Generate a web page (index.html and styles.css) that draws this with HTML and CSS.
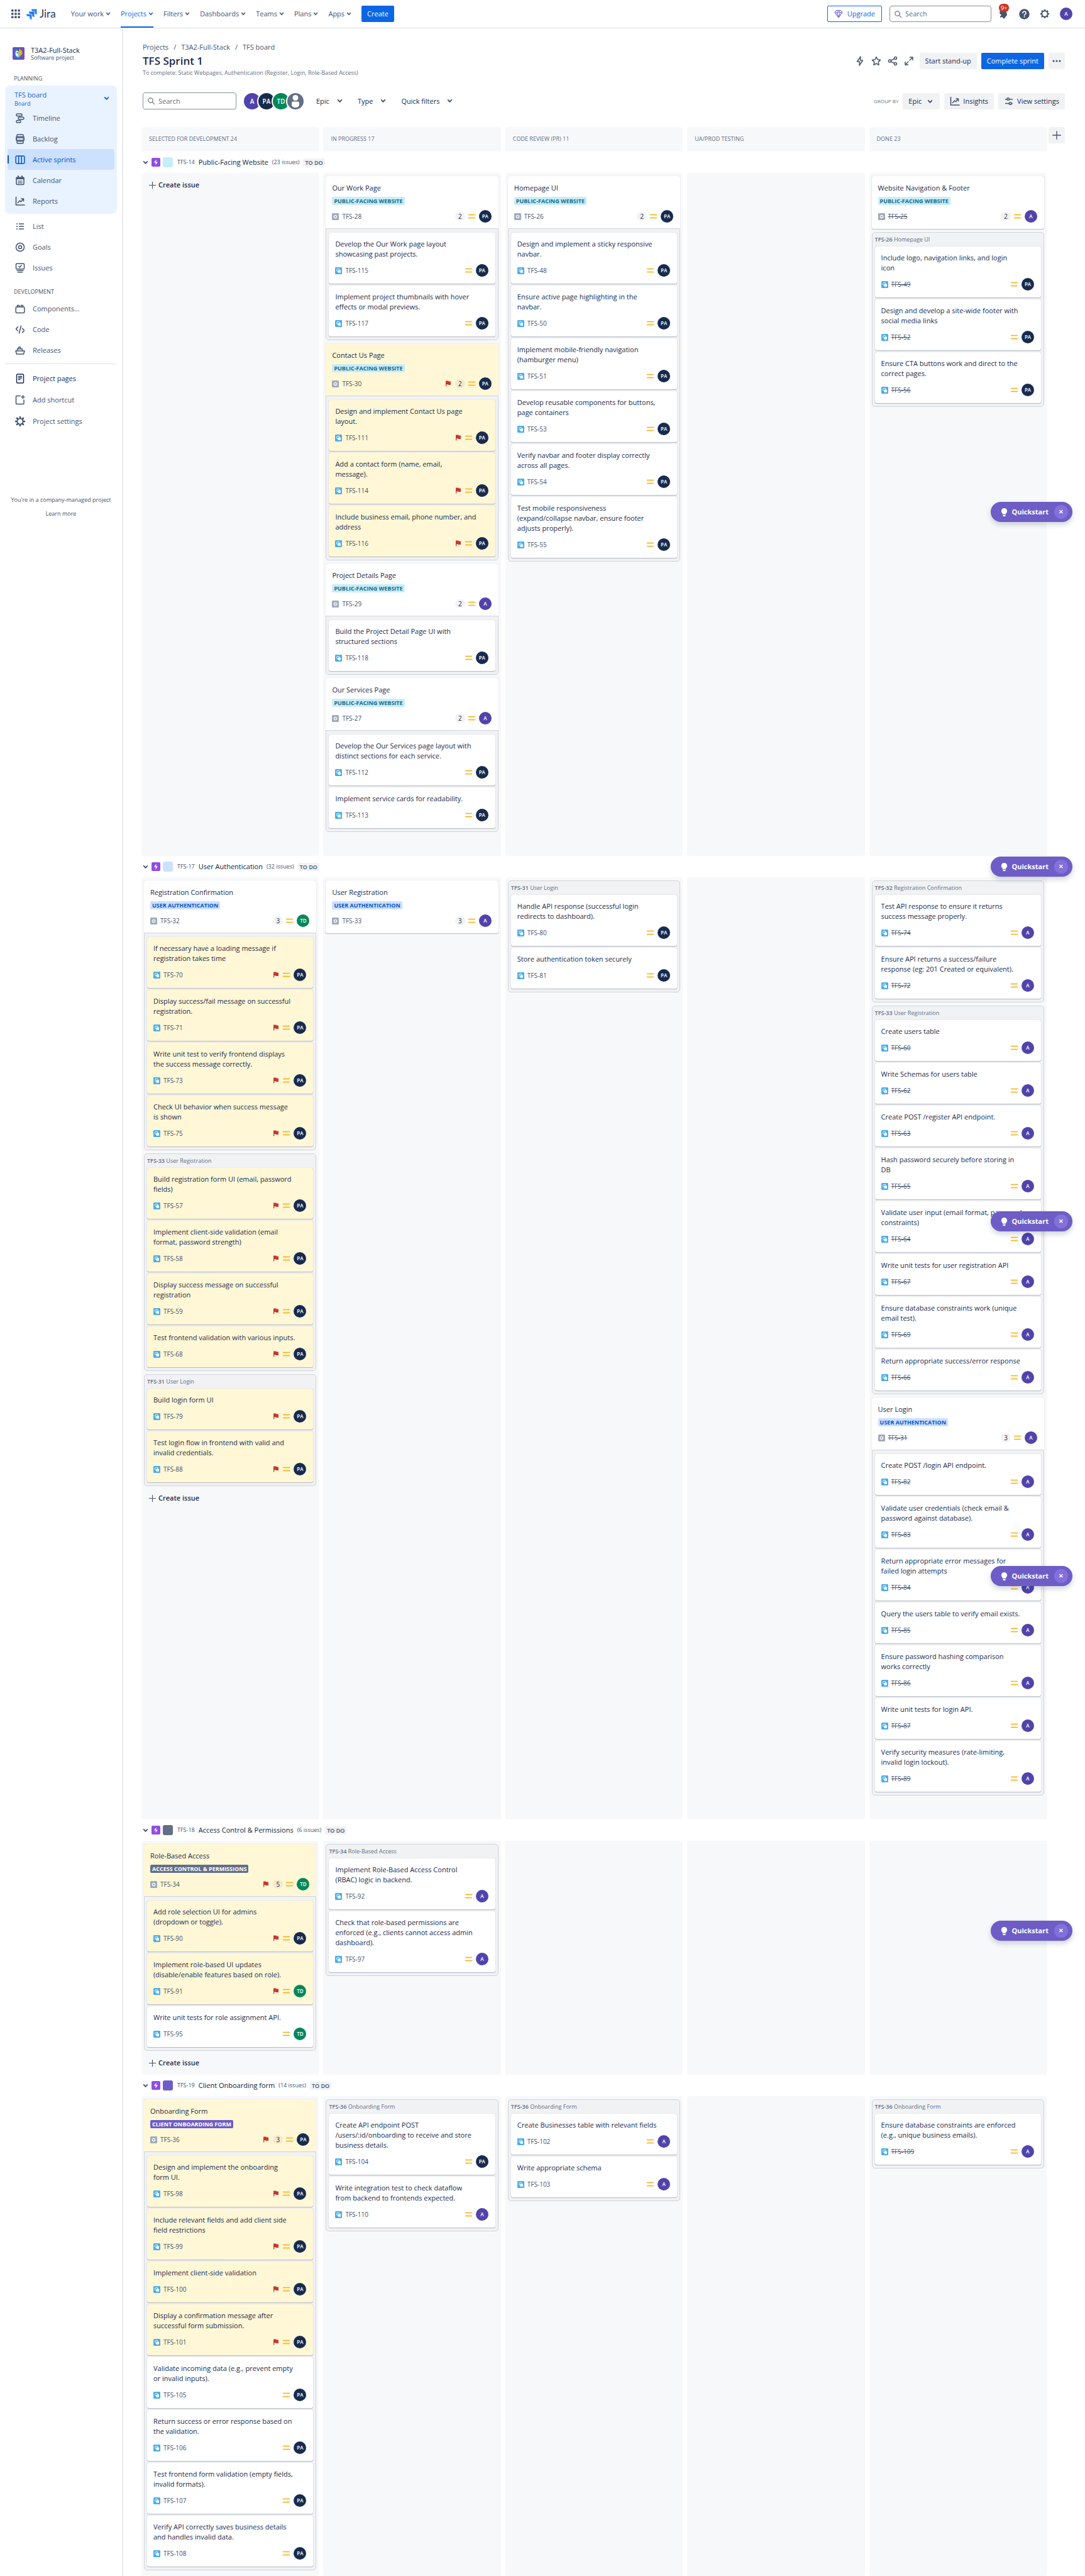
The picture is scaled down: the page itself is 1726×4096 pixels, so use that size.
FILE: index.html
```html
<!DOCTYPE html>
<html lang="en">
<head>
<meta charset="utf-8">
<title>TFS Sprint 1 - Jira</title>
<meta name="viewport" content="width=device-width, initial-scale=1">
<link rel="stylesheet" href="styles.css">
</head>
<body>
<svg class="defs" aria-hidden="true">
  <symbol id="chev" viewBox="0 0 8 8"><path d="M1.5 2.5 4 5.3 6.500 2.500" fill="none" stroke="currentColor" stroke-width="1.600" stroke-linecap="round" stroke-linejoin="round"/></symbol>
  <symbol id="sub" viewBox="0 0 12 12"><rect width="12" height="12" rx="1.500" fill="#4BADE8"/><rect x="3" y="2.800" width="4.600" height="4.200" rx=".8" fill="none" stroke="#fff"/><rect x="5" y="5" width="4.800" height="4.500" rx=".8" fill="#fff"/></symbol>
  <symbol id="obj" viewBox="0 0 12 12"><rect width="12" height="12" rx="1.500" fill="#9FABBB"/><circle cx="6" cy="6" r="2.300" fill="none" stroke="#fff" stroke-width="1.400"/></symbol>
  <symbol id="pri" viewBox="0 0 11 12"><path d="M.5 3.500h10M.5 8.500h10" stroke="#FFAB00" stroke-width="1.600" fill="none" stroke-linecap="round"/></symbol>
  <symbol id="flag" viewBox="0 0 8 10"><path d="M0 .6V9.500h1.300V6.200h2.200l.6.9H8V1.500H5L4.400.6z" fill="#C9372C"/></symbol>
  <symbol id="epic" viewBox="0 0 14 14"><rect width="14" height="14" rx="2" fill="#904EE2"/><path d="M7.600 2.500 4 7.600h2.700L6.400 11.500 10 6.400H7.300z" fill="#fff"/></symbol>
  <symbol id="plus" viewBox="0 0 14 14"><path d="M7 1.500v11M1.500 7h11" stroke="currentColor" stroke-width="1.200" fill="none" stroke-linecap="round"/></symbol>
  <symbol id="search" viewBox="0 0 14 14"><circle cx="6" cy="6" r="4" fill="none" stroke="currentColor" stroke-width="1.300"/><path d="m9 9 3.500 3.500" stroke="currentColor" stroke-width="1.300" stroke-linecap="round"/></symbol>
  <symbol id="gear" viewBox="0 0 16 16"><circle cx="8" cy="8" r="4.600" fill="none" stroke="currentColor" stroke-width="1.800"/><path d="M8 1v2M8 13v2M1 8h2M13 8h2M3 3l1.500 1.500M11.500 11.500 13 13M3 13l1.500-1.500M11.500 4.500 13 3" stroke="currentColor" stroke-width="2.600"/></symbol>
  <symbol id="chart" viewBox="0 0 16 16"><path d="M1.500 1.500v12.500H15" fill="none" stroke="currentColor" stroke-width="1.600" stroke-linecap="round" stroke-linejoin="round"/><path d="m4.500 10.500 3-3.500 2 1.800 3.800-4.600M9.800 4h3.700v3.700" fill="none" stroke="currentColor" stroke-width="1.500" stroke-linecap="round" stroke-linejoin="round"/></symbol>
  <symbol id="bulb" viewBox="0 0 12 16"><path d="M6 1a5 5 0 0 0-3 9v1.500h6V10a5 5 0 0 0-3-9zM3.800 12.600h4.400V15H3.800z" fill="#fff"/></symbol>
</svg>

<header class="topbar">
  <nav class="topnav" aria-label="Main">
    <button class="bare" type="button" aria-label="Switch apps"><svg width="14" height="14" viewBox="0 0 14 14" fill="#44546F"><rect width="3.500" height="3.500" rx="1"/><rect x="5.200" width="3.500" height="3.500" rx="1"/><rect x="10.400" width="3.500" height="3.500" rx="1"/><rect y="5.200" width="3.500" height="3.500" rx="1"/><rect x="5.200" y="5.200" width="3.500" height="3.500" rx="1"/><rect x="10.400" y="5.200" width="3.500" height="3.500" rx="1"/><rect y="10.400" width="3.500" height="3.500" rx="1"/><rect x="5.200" y="10.400" width="3.500" height="3.500" rx="1"/><rect x="10.400" y="10.400" width="3.500" height="3.500" rx="1"/></svg></button>
    <a class="brand" href="#"><svg width="17" height="17" viewBox="0 0 17 17"><path d="M8 .5h8.500V9A3.300 3.300 0 0 1 13.200 5.700V4h-1.700A3.400 3.400 0 0 1 8 .5z" fill="#2684FF"/><path d="M4 4.500h8.500V13a3.300 3.300 0 0 1-3.300-3.300V8H7.500A3.400 3.400 0 0 1 4 4.500z" fill="#2472E8"/><path d="M0 8.500h8.500V17a3.300 3.300 0 0 1-3.300-3.300V12H3.500A3.400 3.400 0 0 1 0 8.500z" fill="#2684FF"/></svg>Jira</a>
    <a class="item" href="#">Your work<svg><use href="#chev"/></svg></a>
    <a class="item current" href="#">Projects<svg><use href="#chev"/></svg></a>
    <a class="item" href="#">Filters<svg><use href="#chev"/></svg></a>
    <a class="item" href="#">Dashboards<svg><use href="#chev"/></svg></a>
    <a class="item" href="#">Teams<svg><use href="#chev"/></svg></a>
    <a class="item" href="#">Plans<svg><use href="#chev"/></svg></a>
    <a class="item" href="#">Apps<svg><use href="#chev"/></svg></a>
    <button class="btn primary" type="button">Create</button>
  </nav>
  <div class="tools">
    <button class="btn upgrade" type="button"><svg width="14" height="14" viewBox="0 0 14 14" fill="none" stroke="#8270DB" stroke-width="1.200" stroke-linejoin="round"><path d="M3.500 1.500h7L13 5l-6 8L1 5zM1 5h12M4.500 5 7 13l2.500-8L7 1.500z"/></svg>Upgrade</button>
    <label class="field top"><svg><use href="#search"/></svg><input type="search" placeholder="Search" aria-label="Search Jira"></label>
    <button class="bare bell" type="button" aria-label="Notifications"><svg width="16" height="18" viewBox="0 0 16 18" fill="#44546F"><path d="M2 3c4-2 9 0 10 3l1 5-5 6-3-3-3 1v-2l2-2-3-3z"/></svg><span>9+</span></button>
    <button class="bare" type="button" aria-label="Help"><svg width="17" height="17" viewBox="0 0 17 17"><circle cx="8.500" cy="8.500" r="8.200" fill="#44546F"/><path d="M6 6.700a2.500 2.500 0 1 1 3.600 2.200c-.8.4-1.100.8-1.100 1.500" fill="none" stroke="#fff" stroke-width="1.600" stroke-linecap="round"/><circle cx="8.500" cy="12.700" r="1" fill="#fff"/></svg></button>
    <button class="bare" type="button" aria-label="Settings"><svg width="16" height="16"><use href="#gear"/></svg></button>
    <span class="av a">A</span>
  </div>
</header>

<div class="shell">
<aside class="side">
  <div class="project">
    <svg width="19" height="20" viewBox="0 0 19 20"><rect width="19" height="20" rx="2" fill="#6554C0"/><path d="M10 3.500a6 6.500 0 0 0 0 13z" fill="#fff" stroke="#00B8D9" stroke-width="1.400"/><path d="M10 3a6 6.500 0 0 1 5.500 8L10 16z" fill="#FFAB00"/><path d="M10 3a6 6.500 0 0 0-3 1.500l3 2.500z" fill="#253858"/><circle cx="7.500" cy="9" r="1.100" fill="#253858"/></svg>
    <div><strong>T3A2-Full-Stack</strong><small>Software project</small></div>
  </div>
  <h2>Planning</h2>
  <nav class="panel" aria-label="Board">
    <button class="boardpick" type="button"><span>TFS board<small>Board</small></span><svg><use href="#chev"/></svg></button>
    <a href="#"><svg viewBox="0 0 16 16"><rect x="2" y="1" width="9" height="3.500" rx="1.500"/><rect x="5" y="6.200" width="9" height="3.500" rx="1.500"/><rect x="2" y="11.500" width="7" height="3.500" rx="1.500"/></svg>Timeline</a>
    <a href="#"><svg viewBox="0 0 16 16"><rect x="3" y="1" width="10" height="3.500" rx="1"/><path d="M2 4.500v6M14 4.500v6"/><rect x="2" y="6" width="12" height="4" rx="1"/><rect x="3" y="11.500" width="10" height="3.500" rx="1"/></svg>Backlog</a>
    <a class="on" href="#"><svg viewBox="0 0 16 16"><rect x="1.200" y="2" width="13.600" height="12" rx="1.500"/><path d="M5.700 2v12M10.300 2v12"/></svg>Active sprints</a>
    <a href="#"><svg viewBox="0 0 16 16"><rect x="2" y="3" width="12" height="11.500" rx="1.500"/><path d="M2 5h12M5 1v2M11 1v2" stroke-width="2"/><path d="M5 9h1M7.500 9h1M10 9h1M5 11.700h1M7.500 11.700h1M10 11.700h1"/></svg>Calendar</a>
    <a href="#"><svg><use href="#chart"/></svg>Reports</a>
  </nav>
  <nav class="links" aria-label="Planning">
    <a href="#"><svg viewBox="0 0 16 16"><path d="M2.500 4h1M6.500 4h7M2.500 8h1M6.500 8h7M2.500 12h1M6.500 12h7"/></svg>List</a>
    <a href="#"><svg viewBox="0 0 16 16"><circle cx="8" cy="8" r="6.500"/><circle cx="8" cy="8" r="2.500"/></svg>Goals</a>
    <a href="#"><svg viewBox="0 0 16 16"><rect x="1.500" y="1.200" width="13" height="8.600" rx="1"/><path d="m6 5.500 1.500 1.500L10 4M3 12.200h10M4.500 14.800h7"/></svg>Issues</a>
  </nav>
  <h2>Development</h2>
  <nav class="links" aria-label="Development">
    <a href="#"><svg viewBox="0 0 16 16"><rect x="1.200" y="5" width="13.600" height="9.500" rx="1.500"/><path d="M3.500 5V2.500h3V5M9.500 5V2.500h3V5"/></svg>Components...</a>
    <a href="#"><svg viewBox="0 0 16 16"><path d="M4.500 3.500 1.500 7l3 3M9.500 2l-3 12M11.500 6l3 3.500-3 3.500"/></svg>Code</a>
    <a href="#"><svg viewBox="0 0 16 16"><path d="M1 9h14l-1.500 5h-11zM3.500 9V5.800h8V9M5.500 5.800V3h3v2.800"/></svg>Releases</a>
  </nav>
  <hr>
  <nav class="links" aria-label="Project">
    <a class="strong" href="#"><svg viewBox="0 0 16 16"><rect x="2.500" y="1" width="11" height="14" rx="1.500"/><path d="M5.500 4.500h5M5.500 7h5M5.500 9.500h2.500"/></svg>Project pages</a>
    <a href="#"><svg viewBox="0 0 16 16"><path d="M8 1.500H2.500a1 1 0 0 0-1 1v11a1 1 0 0 0 1 1h10.500a1 1 0 0 0 1-1V8M12.500.8v5M10 3.300h5"/></svg>Add shortcut</a>
    <a href="#"><svg><use href="#gear"/></svg>Project settings</a>
  </nav>
  <div class="managed"><p>You're in a company-managed project</p><a href="#">Learn more</a></div>
</aside>

<main>
  <nav class="crumbs" aria-label="Breadcrumb"><a href="#">Projects</a><span>/</span><a href="#">T3A2-Full-Stack</a><span>/</span><a href="#">TFS board</a></nav>
  <div class="titlebar">
    <h1>TFS Sprint 1</h1>
    <div class="actions">
      <button class="bare" type="button" aria-label="Automation"><svg viewBox="0 0 16 16"><path d="M9 1 3.500 9H7.500L7 15l5.500-8H8.500z"/></svg></button>
      <button class="bare" type="button" aria-label="Star"><svg viewBox="0 0 16 16"><path d="m8 1.500 2 4.300 4.600.6-3.400 3.200.9 4.700L8 12l-4.100 2.300.9-4.700L1.400 6.400 6 5.800z"/></svg></button>
      <button class="bare" type="button" aria-label="Share"><svg viewBox="0 0 16 16"><circle cx="3.500" cy="8" r="2"/><circle cx="12.500" cy="3.500" r="2"/><circle cx="12.500" cy="12.500" r="2"/><path d="m5.500 7 5-2.600M5.500 9l5 2.600"/></svg></button>
      <button class="bare" type="button" aria-label="Full screen"><svg viewBox="0 0 16 16"><path d="M9.500 2H14v4.500M14 2 9.300 6.700M6.500 14H2V9.500M2 14l4.700-4.700"/></svg></button>
      <button class="btn" type="button">Start stand-up</button>
      <button class="btn primary" type="button">Complete sprint</button>
      <button class="btn square" type="button" aria-label="More"><svg width="14" height="4" viewBox="0 0 14 4" fill="#44546F"><circle cx="2" cy="2" r="1.600"/><circle cx="7" cy="2" r="1.600"/><circle cx="12" cy="2" r="1.600"/></svg></button>
    </div>
  </div>
  <p class="goal">To complete: Static Webpages, Authentication (Register, Login, Role-Based Access)</p>
  <div class="toolbar">
    <label class="field"><svg><use href="#search"/></svg><input type="search" placeholder="Search" aria-label="Search this board"></label>
    <div class="people"><span class="av a">A</span><span class="av pa">PA</span><span class="av td">TD</span><span class="av none"><svg width="14" height="22" viewBox="0 0 14 22" fill="#fff"><circle cx="7" cy="5.500" r="4.500"/><path d="M1 13.500a2 2 0 0 1 2-2h8a2 2 0 0 1 2 2V17a6 4 0 0 1-12 0z"/></svg></span></div>
    <button class="menu" type="button">Epic<svg><use href="#chev"/></svg></button>
    <button class="menu" type="button">Type<svg><use href="#chev"/></svg></button>
    <button class="menu" type="button">Quick filters<svg><use href="#chev"/></svg></button>
    <div class="view">
      <label for="group">Group by</label>
      <span class="pick"><select id="group"><option>Epic</option></select><svg><use href="#chev"/></svg></span>
      <button class="btn" type="button"><svg width="16" height="16"><use href="#chart"/></svg>Insights</button>
      <button class="btn" type="button"><svg width="16" height="16" viewBox="0 0 16 16" fill="none" stroke="currentColor" stroke-width="1.500"><path d="M2 5h2.500M9 5h5M2 11.500h6M12.500 11.500H14"/><circle cx="6.700" cy="4.500" r="1.800"/><circle cx="10.200" cy="11.500" r="1.800"/></svg>View settings</button>
    </div>
  </div>

  <div class="heads">
    <div class="grid"><h3>Selected for development 24</h3><h3>In progress 17</h3><h3>Code review (PR) 11</h3><h3>UA/Prod testing</h3><h3>Done 23</h3></div>
    <button class="btn square" type="button" aria-label="Add column"><svg width="16" height="16"><use href="#plus"/></svg></button>
  </div>

  <section class="lane">
    <header><svg class="tog"><use href="#chev"/></svg><svg class="epic"><use href="#epic"/></svg><i class="sw cyan"></i><a href="#">TFS-14</a><b>Public-Facing Website</b><span>(23 issues)</span><em>TO DO</em></header>
    <div class="grid">
      <div class="col">
        <button class="create" type="button"><svg><use href="#plus"/></svg>Create issue</button>
      </div>
      <div class="col">
        <div class="group">
          <article class="card parent"><p>Our Work Page</p><span class="tag cyan">PUBLIC-FACING WEBSITE</span><footer><svg class="ty"><use href="#obj"/></svg><a href="#">TFS-28</a><span class="est">2</span><svg class="pr"><use href="#pri"/></svg><span class="av pa">PA</span></footer></article>
          <div class="subs">
            <article class="card"><p>Develop the Our Work page layout<br>showcasing past projects.</p><footer><svg class="ty"><use href="#sub"/></svg><a href="#">TFS-115</a><svg class="pr"><use href="#pri"/></svg><span class="av pa">PA</span></footer></article>
            <article class="card"><p>Implement project thumbnails with hover<br>effects or modal previews.</p><footer><svg class="ty"><use href="#sub"/></svg><a href="#">TFS-117</a><svg class="pr"><use href="#pri"/></svg><span class="av pa">PA</span></footer></article>
          </div>
        </div>
        <div class="group">
          <article class="card parent hot"><p>Contact Us Page</p><span class="tag cyan">PUBLIC-FACING WEBSITE</span><footer><svg class="ty"><use href="#obj"/></svg><a href="#">TFS-30</a><svg class="fl"><use href="#flag"/></svg><span class="est">2</span><svg class="pr"><use href="#pri"/></svg><span class="av pa">PA</span></footer></article>
          <div class="subs">
            <article class="card hot"><p>Design and implement Contact Us page<br>layout.</p><footer><svg class="ty"><use href="#sub"/></svg><a href="#">TFS-111</a><svg class="fl"><use href="#flag"/></svg><svg class="pr"><use href="#pri"/></svg><span class="av pa">PA</span></footer></article>
            <article class="card hot"><p>Add a contact form (name, email,<br>message).</p><footer><svg class="ty"><use href="#sub"/></svg><a href="#">TFS-114</a><svg class="fl"><use href="#flag"/></svg><svg class="pr"><use href="#pri"/></svg><span class="av pa">PA</span></footer></article>
            <article class="card hot"><p>Include business email, phone number, and<br>address</p><footer><svg class="ty"><use href="#sub"/></svg><a href="#">TFS-116</a><svg class="fl"><use href="#flag"/></svg><svg class="pr"><use href="#pri"/></svg><span class="av pa">PA</span></footer></article>
          </div>
        </div>
        <div class="group">
          <article class="card parent"><p>Project Details Page</p><span class="tag cyan">PUBLIC-FACING WEBSITE</span><footer><svg class="ty"><use href="#obj"/></svg><a href="#">TFS-29</a><span class="est">2</span><svg class="pr"><use href="#pri"/></svg><span class="av a">A</span></footer></article>
          <div class="subs">
            <article class="card"><p>Build the Project Detail Page UI with<br>structured sections</p><footer><svg class="ty"><use href="#sub"/></svg><a href="#">TFS-118</a><svg class="pr"><use href="#pri"/></svg><span class="av pa">PA</span></footer></article>
          </div>
        </div>
        <div class="group">
          <article class="card parent"><p>Our Services Page</p><span class="tag cyan">PUBLIC-FACING WEBSITE</span><footer><svg class="ty"><use href="#obj"/></svg><a href="#">TFS-27</a><span class="est">2</span><svg class="pr"><use href="#pri"/></svg><span class="av a">A</span></footer></article>
          <div class="subs">
            <article class="card"><p>Develop the Our Services page layout with<br>distinct sections for each service.</p><footer><svg class="ty"><use href="#sub"/></svg><a href="#">TFS-112</a><svg class="pr"><use href="#pri"/></svg><span class="av pa">PA</span></footer></article>
            <article class="card"><p>Implement service cards for readability.</p><footer><svg class="ty"><use href="#sub"/></svg><a href="#">TFS-113</a><svg class="pr"><use href="#pri"/></svg><span class="av pa">PA</span></footer></article>
          </div>
        </div>
      </div>
      <div class="col">
        <div class="group">
          <article class="card parent"><p>Homepage UI</p><span class="tag cyan">PUBLIC-FACING WEBSITE</span><footer><svg class="ty"><use href="#obj"/></svg><a href="#">TFS-26</a><span class="est">2</span><svg class="pr"><use href="#pri"/></svg><span class="av pa">PA</span></footer></article>
          <div class="subs">
            <article class="card"><p>Design and implement a sticky responsive<br>navbar.</p><footer><svg class="ty"><use href="#sub"/></svg><a href="#">TFS-48</a><svg class="pr"><use href="#pri"/></svg><span class="av pa">PA</span></footer></article>
            <article class="card"><p>Ensure active page highlighting in the<br>navbar.</p><footer><svg class="ty"><use href="#sub"/></svg><a href="#">TFS-50</a><svg class="pr"><use href="#pri"/></svg><span class="av pa">PA</span></footer></article>
            <article class="card"><p>Implement mobile-friendly navigation<br>(hamburger menu)</p><footer><svg class="ty"><use href="#sub"/></svg><a href="#">TFS-51</a><svg class="pr"><use href="#pri"/></svg><span class="av pa">PA</span></footer></article>
            <article class="card"><p>Develop reusable components for buttons,<br>page containers</p><footer><svg class="ty"><use href="#sub"/></svg><a href="#">TFS-53</a><svg class="pr"><use href="#pri"/></svg><span class="av pa">PA</span></footer></article>
            <article class="card"><p>Verify navbar and footer display correctly<br>across all pages.</p><footer><svg class="ty"><use href="#sub"/></svg><a href="#">TFS-54</a><svg class="pr"><use href="#pri"/></svg><span class="av pa">PA</span></footer></article>
            <article class="card"><p>Test mobile responsiveness<br>(expand/collapse navbar, ensure footer<br>adjusts properly).</p><footer><svg class="ty"><use href="#sub"/></svg><a href="#">TFS-55</a><svg class="pr"><use href="#pri"/></svg><span class="av pa">PA</span></footer></article>
          </div>
        </div>
      </div>
      <div class="col"></div>
      <div class="col done">
        <article class="card parent"><p>Website Navigation &amp; Footer</p><span class="tag cyan">PUBLIC-FACING WEBSITE</span><footer><svg class="ty"><use href="#obj"/></svg><a href="#">TFS-25</a><span class="est">2</span><svg class="pr"><use href="#pri"/></svg><span class="av a">A</span></footer></article>
        <div class="group subs">
          <h4><b>TFS-26</b> Homepage UI</h4>
          <article class="card"><p>Include logo, navigation links, and login<br>icon</p><footer><svg class="ty"><use href="#sub"/></svg><a href="#">TFS-49</a><svg class="pr"><use href="#pri"/></svg><span class="av pa">PA</span></footer></article>
          <article class="card"><p>Design and develop a site-wide footer with<br>social media links</p><footer><svg class="ty"><use href="#sub"/></svg><a href="#">TFS-52</a><svg class="pr"><use href="#pri"/></svg><span class="av pa">PA</span></footer></article>
          <article class="card"><p>Ensure CTA buttons work and direct to the<br>correct pages.</p><footer><svg class="ty"><use href="#sub"/></svg><a href="#">TFS-56</a><svg class="pr"><use href="#pri"/></svg><span class="av pa">PA</span></footer></article>
        </div>
      </div>
    </div>
  </section>

  <section class="lane">
    <header><svg class="tog"><use href="#chev"/></svg><svg class="epic"><use href="#epic"/></svg><i class="sw blue"></i><a href="#">TFS-17</a><b>User Authentication</b><span>(32 issues)</span><em>TO DO</em></header>
    <div class="grid">
      <div class="col">
        <div class="group">
          <article class="card parent"><p>Registration Confirmation</p><span class="tag blue">USER AUTHENTICATION</span><footer><svg class="ty"><use href="#obj"/></svg><a href="#">TFS-32</a><span class="est">3</span><svg class="pr"><use href="#pri"/></svg><span class="av td">TD</span></footer></article>
          <div class="subs">
            <article class="card hot"><p>If necessary have a loading message if<br>registration takes time</p><footer><svg class="ty"><use href="#sub"/></svg><a href="#">TFS-70</a><svg class="fl"><use href="#flag"/></svg><svg class="pr"><use href="#pri"/></svg><span class="av pa">PA</span></footer></article>
            <article class="card hot"><p>Display success/fail message on successful<br>registration.</p><footer><svg class="ty"><use href="#sub"/></svg><a href="#">TFS-71</a><svg class="fl"><use href="#flag"/></svg><svg class="pr"><use href="#pri"/></svg><span class="av pa">PA</span></footer></article>
            <article class="card hot"><p>Write unit test to verify frontend displays<br>the success message correctly.</p><footer><svg class="ty"><use href="#sub"/></svg><a href="#">TFS-73</a><svg class="fl"><use href="#flag"/></svg><svg class="pr"><use href="#pri"/></svg><span class="av pa">PA</span></footer></article>
            <article class="card hot"><p>Check UI behavior when success message<br>is shown</p><footer><svg class="ty"><use href="#sub"/></svg><a href="#">TFS-75</a><svg class="fl"><use href="#flag"/></svg><svg class="pr"><use href="#pri"/></svg><span class="av pa">PA</span></footer></article>
          </div>
        </div>
        <div class="group subs">
          <h4><b>TFS-33</b> User Registration</h4>
          <article class="card hot"><p>Build registration form UI (email, password<br>fields)</p><footer><svg class="ty"><use href="#sub"/></svg><a href="#">TFS-57</a><svg class="fl"><use href="#flag"/></svg><svg class="pr"><use href="#pri"/></svg><span class="av pa">PA</span></footer></article>
          <article class="card hot"><p>Implement client-side validation (email<br>format, password strength)</p><footer><svg class="ty"><use href="#sub"/></svg><a href="#">TFS-58</a><svg class="fl"><use href="#flag"/></svg><svg class="pr"><use href="#pri"/></svg><span class="av pa">PA</span></footer></article>
          <article class="card hot"><p>Display success message on successful<br>registration</p><footer><svg class="ty"><use href="#sub"/></svg><a href="#">TFS-59</a><svg class="fl"><use href="#flag"/></svg><svg class="pr"><use href="#pri"/></svg><span class="av pa">PA</span></footer></article>
          <article class="card hot"><p>Test frontend validation with various inputs.</p><footer><svg class="ty"><use href="#sub"/></svg><a href="#">TFS-68</a><svg class="fl"><use href="#flag"/></svg><svg class="pr"><use href="#pri"/></svg><span class="av pa">PA</span></footer></article>
        </div>
        <div class="group subs">
          <h4><b>TFS-31</b> User Login</h4>
          <article class="card hot"><p>Build login form UI</p><footer><svg class="ty"><use href="#sub"/></svg><a href="#">TFS-79</a><svg class="fl"><use href="#flag"/></svg><svg class="pr"><use href="#pri"/></svg><span class="av pa">PA</span></footer></article>
          <article class="card hot"><p>Test login flow in frontend with valid and<br>invalid credentials.</p><footer><svg class="ty"><use href="#sub"/></svg><a href="#">TFS-88</a><svg class="fl"><use href="#flag"/></svg><svg class="pr"><use href="#pri"/></svg><span class="av pa">PA</span></footer></article>
        </div>
        <button class="create" type="button"><svg><use href="#plus"/></svg>Create issue</button>
      </div>
      <div class="col">
        <article class="card parent"><p>User Registration</p><span class="tag blue">USER AUTHENTICATION</span><footer><svg class="ty"><use href="#obj"/></svg><a href="#">TFS-33</a><span class="est">3</span><svg class="pr"><use href="#pri"/></svg><span class="av a">A</span></footer></article>
      </div>
      <div class="col">
        <div class="group subs">
          <h4><b>TFS-31</b> User Login</h4>
          <article class="card"><p>Handle API response (successful login<br>redirects to dashboard).</p><footer><svg class="ty"><use href="#sub"/></svg><a href="#">TFS-80</a><svg class="pr"><use href="#pri"/></svg><span class="av pa">PA</span></footer></article>
          <article class="card"><p>Store authentication token securely</p><footer><svg class="ty"><use href="#sub"/></svg><a href="#">TFS-81</a><svg class="pr"><use href="#pri"/></svg><span class="av pa">PA</span></footer></article>
        </div>
      </div>
      <div class="col"></div>
      <div class="col done">
        <div class="group subs">
          <h4><b>TFS-32</b> Registration Confirmation</h4>
          <article class="card"><p>Test API response to ensure it returns<br>success message properly.</p><footer><svg class="ty"><use href="#sub"/></svg><a href="#">TFS-74</a><svg class="pr"><use href="#pri"/></svg><span class="av a">A</span></footer></article>
          <article class="card"><p>Ensure API returns a success/failure<br>response (eg: 201 Created or equivalent).</p><footer><svg class="ty"><use href="#sub"/></svg><a href="#">TFS-72</a><svg class="pr"><use href="#pri"/></svg><span class="av a">A</span></footer></article>
        </div>
        <div class="group subs">
          <h4><b>TFS-33</b> User Registration</h4>
          <article class="card"><p>Create users table</p><footer><svg class="ty"><use href="#sub"/></svg><a href="#">TFS-60</a><svg class="pr"><use href="#pri"/></svg><span class="av a">A</span></footer></article>
          <article class="card"><p>Write Schemas for users table</p><footer><svg class="ty"><use href="#sub"/></svg><a href="#">TFS-62</a><svg class="pr"><use href="#pri"/></svg><span class="av a">A</span></footer></article>
          <article class="card"><p>Create POST /register API endpoint.</p><footer><svg class="ty"><use href="#sub"/></svg><a href="#">TFS-63</a><svg class="pr"><use href="#pri"/></svg><span class="av a">A</span></footer></article>
          <article class="card"><p>Hash password securely before storing in<br>DB</p><footer><svg class="ty"><use href="#sub"/></svg><a href="#">TFS-65</a><svg class="pr"><use href="#pri"/></svg><span class="av a">A</span></footer></article>
          <article class="card"><p>Validate user input (email format, password<br>constraints)</p><footer><svg class="ty"><use href="#sub"/></svg><a href="#">TFS-64</a><svg class="pr"><use href="#pri"/></svg><span class="av a">A</span></footer></article>
          <article class="card"><p>Write unit tests for user registration API</p><footer><svg class="ty"><use href="#sub"/></svg><a href="#">TFS-67</a><svg class="pr"><use href="#pri"/></svg><span class="av a">A</span></footer></article>
          <article class="card"><p>Ensure database constraints work (unique<br>email test).</p><footer><svg class="ty"><use href="#sub"/></svg><a href="#">TFS-69</a><svg class="pr"><use href="#pri"/></svg><span class="av a">A</span></footer></article>
          <article class="card"><p>Return appropriate success/error response</p><footer><svg class="ty"><use href="#sub"/></svg><a href="#">TFS-66</a><svg class="pr"><use href="#pri"/></svg><span class="av a">A</span></footer></article>
        </div>
        <div class="group">
          <article class="card parent"><p>User Login</p><span class="tag blue">USER AUTHENTICATION</span><footer><svg class="ty"><use href="#obj"/></svg><a href="#">TFS-31</a><span class="est">3</span><svg class="pr"><use href="#pri"/></svg><span class="av a">A</span></footer></article>
          <div class="subs">
            <article class="card"><p>Create POST /login API endpoint.</p><footer><svg class="ty"><use href="#sub"/></svg><a href="#">TFS-82</a><svg class="pr"><use href="#pri"/></svg><span class="av a">A</span></footer></article>
            <article class="card"><p>Validate user credentials (check email &amp;<br>password against database).</p><footer><svg class="ty"><use href="#sub"/></svg><a href="#">TFS-83</a><svg class="pr"><use href="#pri"/></svg><span class="av a">A</span></footer></article>
            <article class="card"><p>Return appropriate error messages for<br>failed login attempts</p><footer><svg class="ty"><use href="#sub"/></svg><a href="#">TFS-84</a><svg class="pr"><use href="#pri"/></svg><span class="av a">A</span></footer></article>
            <article class="card"><p>Query the users table to verify email exists.</p><footer><svg class="ty"><use href="#sub"/></svg><a href="#">TFS-85</a><svg class="pr"><use href="#pri"/></svg><span class="av a">A</span></footer></article>
            <article class="card"><p>Ensure password hashing comparison<br>works correctly</p><footer><svg class="ty"><use href="#sub"/></svg><a href="#">TFS-86</a><svg class="pr"><use href="#pri"/></svg><span class="av a">A</span></footer></article>
            <article class="card"><p>Write unit tests for login API.</p><footer><svg class="ty"><use href="#sub"/></svg><a href="#">TFS-87</a><svg class="pr"><use href="#pri"/></svg><span class="av a">A</span></footer></article>
            <article class="card"><p>Verify security measures (rate-limiting,<br>invalid login lockout).</p><footer><svg class="ty"><use href="#sub"/></svg><a href="#">TFS-89</a><svg class="pr"><use href="#pri"/></svg><span class="av a">A</span></footer></article>
          </div>
        </div>
      </div>
    </div>
  </section>

  <section class="lane">
    <header><svg class="tog"><use href="#chev"/></svg><svg class="epic"><use href="#epic"/></svg><i class="sw slate"></i><a href="#">TFS-18</a><b>Access Control &amp; Permissions</b><span>(6 issues)</span><em>TO DO</em></header>
    <div class="grid">
      <div class="col">
        <div class="group">
          <article class="card parent hot"><p>Role-Based Access</p><span class="tag slate">ACCESS CONTROL &amp; PERMISSIONS</span><footer><svg class="ty"><use href="#obj"/></svg><a href="#">TFS-34</a><svg class="fl"><use href="#flag"/></svg><span class="est">5</span><svg class="pr"><use href="#pri"/></svg><span class="av td">TD</span></footer></article>
          <div class="subs">
            <article class="card hot"><p>Add role selection UI for admins<br>(dropdown or toggle).</p><footer><svg class="ty"><use href="#sub"/></svg><a href="#">TFS-90</a><svg class="fl"><use href="#flag"/></svg><svg class="pr"><use href="#pri"/></svg><span class="av pa">PA</span></footer></article>
            <article class="card hot"><p>Implement role-based UI updates<br>(disable/enable features based on role).</p><footer><svg class="ty"><use href="#sub"/></svg><a href="#">TFS-91</a><svg class="fl"><use href="#flag"/></svg><svg class="pr"><use href="#pri"/></svg><span class="av td">TD</span></footer></article>
            <article class="card"><p>Write unit tests for role assignment API.</p><footer><svg class="ty"><use href="#sub"/></svg><a href="#">TFS-95</a><svg class="pr"><use href="#pri"/></svg><span class="av td">TD</span></footer></article>
          </div>
        </div>
        <button class="create" type="button"><svg><use href="#plus"/></svg>Create issue</button>
      </div>
      <div class="col">
        <div class="group subs">
          <h4><b>TFS-34</b> Role-Based Access</h4>
          <article class="card"><p>Implement Role-Based Access Control<br>(RBAC) logic in backend.</p><footer><svg class="ty"><use href="#sub"/></svg><a href="#">TFS-92</a><svg class="pr"><use href="#pri"/></svg><span class="av a">A</span></footer></article>
          <article class="card"><p>Check that role-based permissions are<br>enforced (e.g., clients cannot access admin<br>dashboard).</p><footer><svg class="ty"><use href="#sub"/></svg><a href="#">TFS-97</a><svg class="pr"><use href="#pri"/></svg><span class="av a">A</span></footer></article>
        </div>
      </div>
      <div class="col"></div>
      <div class="col"></div>
      <div class="col"></div>
    </div>
  </section>

  <section class="lane">
    <header><svg class="tog"><use href="#chev"/></svg><svg class="epic"><use href="#epic"/></svg><i class="sw purple"></i><a href="#">TFS-19</a><b>Client Onboarding form</b><span>(14 issues)</span><em>TO DO</em></header>
    <div class="grid">
      <div class="col">
        <div class="group">
          <article class="card parent hot"><p>Onboarding Form</p><span class="tag purple">CLIENT ONBOARDING FORM</span><footer><svg class="ty"><use href="#obj"/></svg><a href="#">TFS-36</a><svg class="fl"><use href="#flag"/></svg><span class="est">3</span><svg class="pr"><use href="#pri"/></svg><span class="av pa">PA</span></footer></article>
          <div class="subs">
            <article class="card hot"><p>Design and implement the onboarding<br>form UI.</p><footer><svg class="ty"><use href="#sub"/></svg><a href="#">TFS-98</a><svg class="fl"><use href="#flag"/></svg><svg class="pr"><use href="#pri"/></svg><span class="av pa">PA</span></footer></article>
            <article class="card hot"><p>Include relevant fields and add client side<br>field restrictions</p><footer><svg class="ty"><use href="#sub"/></svg><a href="#">TFS-99</a><svg class="fl"><use href="#flag"/></svg><svg class="pr"><use href="#pri"/></svg><span class="av pa">PA</span></footer></article>
            <article class="card hot"><p>Implement client-side validation</p><footer><svg class="ty"><use href="#sub"/></svg><a href="#">TFS-100</a><svg class="fl"><use href="#flag"/></svg><svg class="pr"><use href="#pri"/></svg><span class="av pa">PA</span></footer></article>
            <article class="card hot"><p>Display a confirmation message after<br>successful form submission.</p><footer><svg class="ty"><use href="#sub"/></svg><a href="#">TFS-101</a><svg class="fl"><use href="#flag"/></svg><svg class="pr"><use href="#pri"/></svg><span class="av pa">PA</span></footer></article>
            <article class="card"><p>Validate incoming data (e.g., prevent empty<br>or invalid inputs).</p><footer><svg class="ty"><use href="#sub"/></svg><a href="#">TFS-105</a><svg class="pr"><use href="#pri"/></svg><span class="av pa">PA</span></footer></article>
            <article class="card"><p>Return success or error response based on<br>the validation.</p><footer><svg class="ty"><use href="#sub"/></svg><a href="#">TFS-106</a><svg class="pr"><use href="#pri"/></svg><span class="av pa">PA</span></footer></article>
            <article class="card"><p>Test frontend form validation (empty fields,<br>invalid formats).</p><footer><svg class="ty"><use href="#sub"/></svg><a href="#">TFS-107</a><svg class="pr"><use href="#pri"/></svg><span class="av pa">PA</span></footer></article>
            <article class="card"><p>Verify API correctly saves business details<br>and handles invalid data.</p><footer><svg class="ty"><use href="#sub"/></svg><a href="#">TFS-108</a><svg class="pr"><use href="#pri"/></svg><span class="av pa">PA</span></footer></article>
          </div>
        </div>
      </div>
      <div class="col">
        <div class="group subs">
          <h4><b>TFS-36</b> Onboarding Form</h4>
          <article class="card"><p>Create API endpoint POST<br>/users/:id/onboarding to receive and store<br>business details.</p><footer><svg class="ty"><use href="#sub"/></svg><a href="#">TFS-104</a><svg class="pr"><use href="#pri"/></svg><span class="av pa">PA</span></footer></article>
          <article class="card"><p>Write integration test to check dataflow<br>from backend to frontends expected.</p><footer><svg class="ty"><use href="#sub"/></svg><a href="#">TFS-110</a><svg class="pr"><use href="#pri"/></svg><span class="av a">A</span></footer></article>
        </div>
      </div>
      <div class="col">
        <div class="group subs">
          <h4><b>TFS-36</b> Onboarding Form</h4>
          <article class="card"><p>Create Businesses table with relevant fields</p><footer><svg class="ty"><use href="#sub"/></svg><a href="#">TFS-102</a><svg class="pr"><use href="#pri"/></svg><span class="av a">A</span></footer></article>
          <article class="card"><p>Write appropriate schema</p><footer><svg class="ty"><use href="#sub"/></svg><a href="#">TFS-103</a><svg class="pr"><use href="#pri"/></svg><span class="av a">A</span></footer></article>
        </div>
      </div>
      <div class="col"></div>
      <div class="col done">
        <div class="group subs">
          <h4><b>TFS-36</b> Onboarding Form</h4>
          <article class="card"><p>Ensure database constraints are enforced<br>(e.g., unique business emails).</p><footer><svg class="ty"><use href="#sub"/></svg><a href="#">TFS-109</a><svg class="pr"><use href="#pri"/></svg><span class="av a">A</span></footer></article>
        </div>
      </div>
    </div>
  </section>
</main>
</div>

<div class="quick">
  <div class="pill"><svg><use href="#bulb"/></svg>Quickstart<button type="button" aria-label="Dismiss">✕</button></div>
  <div class="pill"><svg><use href="#bulb"/></svg>Quickstart<button type="button" aria-label="Dismiss">✕</button></div>
  <div class="pill"><svg><use href="#bulb"/></svg>Quickstart<button type="button" aria-label="Dismiss">✕</button></div>
  <div class="pill"><svg><use href="#bulb"/></svg>Quickstart<button type="button" aria-label="Dismiss">✕</button></div>
  <div class="pill"><svg><use href="#bulb"/></svg>Quickstart<button type="button" aria-label="Dismiss">✕</button></div>
</div>
</body>
</html>
```

FILE: styles.css
```css
:root {
  --text: #172b4d;
  --subtle: #44546f;
  --faint: #626f86;
  --blue: #0c66e4;
  --neutral: #f1f2f4;
  --sunken: #f7f8f9;
}

* { box-sizing: border-box; }

body {
  margin: 0;
  position: relative;
  background: #fff;
  color: var(--text);
  font: 400 11px/16px "Open Sans", "Noto Sans", sans-serif;
}

h1, h2, h3, h4, p { margin: 0; font-size: inherit; font-weight: inherit; }
a { color: inherit; text-decoration: none; }
button, input, select { font: inherit; color: inherit; }
svg { flex: none; display: block; }
.defs { position: absolute; width: 0; height: 0; }

/* Controls */
.bare { border: 0; padding: 0; background: none; color: var(--subtle); display: flex; }
.btn {
  display: flex; align-items: center; justify-content: center; gap: 5px;
  height: 26px; padding: 0 9px; border: 0; border-radius: 2px;
  background: var(--neutral); font-weight: 500; white-space: nowrap;
}
.btn svg { color: var(--subtle); }
.btn.primary { background: var(--blue); color: #fff; }
.btn.square { width: 26px; padding: 0; }
.btn.upgrade { background: #fff; border: 1px solid var(--blue); color: var(--blue); padding: 0 10px; gap: 7px; }

.field {
  display: flex; align-items: center; gap: 5px;
  width: 149px; height: 27px; padding: 0 6px;
  border: 1px solid #8590a2; border-radius: 4px; color: var(--faint);
}
.field.top { width: 162px; height: 26px; }
.field svg { width: 13px; height: 13px; }
.field input { width: 100%; min-width: 0; border: 0; padding: 0; background: none; outline: 0; appearance: none; }
.field input::placeholder { color: var(--faint); opacity: 1; }

.av {
  flex: none; display: flex; align-items: center; justify-content: center;
  width: 20px; height: 20px; border-radius: 50%;
  color: #fff; font-size: 8px; line-height: 10px; font-weight: 600;
}
.av.a { background: #5243aa; }
.av.pa { background: #172b4d; }
.av.td { background: #00875a; }
.av.none { background: #626f86; }

/* Top bar */
.topbar {
  display: flex; justify-content: space-between; align-items: center;
  height: 45px; padding: 0 20px 0 18px; border-bottom: 1px solid #dcdfe4;
}
.topnav { display: flex; align-items: center; gap: 16px; height: 44px; }
.brand { display: flex; align-items: center; gap: 4px; margin: 0 8px 0 -6px; font: 400 17px/20px Lato, sans-serif; color: #253858; }
.item {
  display: flex; align-items: center; gap: 3px; height: 44px;
  color: var(--subtle); font-weight: 500;
}
.item svg { width: 8px; height: 8px; }
.item.current { color: var(--blue); box-shadow: inset 0 -2px var(--blue); }
.tools { display: flex; align-items: center; gap: 16px; }
.tools .field { margin: 0 -4px; }
.bell { position: relative; width: 16px; }
.bell span {
  position: absolute; left: 0; top: -7px; padding: 0 3px;
  border-radius: 6px; background: #ca3521; color: #fff; font-size: 9px; line-height: 13px;
}

/* Shell and side bar */
.shell { display: flex; min-height: calc(100vh - 45px); }
.side { flex: none; width: 196px; padding: 28px 8px 0; border-right: 2px solid #ebecf0; color: var(--subtle); }
.project { display: flex; align-items: center; gap: 10px; padding: 0 12px; }
.project strong { display: block; font-weight: 500; line-height: 13px; color: var(--text); }
.side small { display: block; font-size: 9px; line-height: 11px; }
.side h2 { padding: 16px 14px 4px; font-size: 9px; line-height: 12px; font-weight: 500; text-transform: uppercase; }
.project + h2 { padding: 22px 14px 5px; }
.panel { padding: 0 4px 4px; border-radius: 8px; background: #e9f2ff; }
.panel a, .links a {
  display: flex; align-items: center; gap: 12px; height: 33px; padding: 0 12px;
  border-radius: 3px;
}
.links a { padding: 0 16px; }
.side nav a svg { width: 16px; height: 16px; fill: none; stroke: currentColor; stroke-width: 1.5; stroke-linecap: round; stroke-linejoin: round; }
.panel .on { background: #cce0ff; color: #0055cc; position: relative; }
.panel .on::before { content: ""; position: absolute; left: 0; top: 10px; bottom: 10px; width: 2px; background: #0055cc; }
.boardpick {
  display: flex; align-items: center; justify-content: space-between;
  width: 100%; height: 35px; padding: 5px 8px 0 11px; border: 0; background: none;
  color: var(--blue); text-align: left;
}
.boardpick svg { width: 9px; height: 9px; }
.links { display: flex; flex-direction: column; }
.panel + .links { margin-top: 3px; }
.side hr { height: 1px; margin: 5px 0 6px; border: 0; background: #dcdfe4; }
hr + .links { gap: 1px; }
.links .strong { color: var(--text); font-weight: 500; }
.managed { margin-top: 101px; text-align: center; font-size: 9px; white-space: nowrap; }
.managed a { display: block; margin-top: 6px; font-weight: 500; }

/* Board header */
main { flex: 1; min-width: 0; display: flex; flex-direction: column; padding: 22px 32px 0 29px; }
.crumbs { display: flex; gap: 8px; padding-left: 2px; color: var(--subtle); }
.titlebar { display: flex; align-items: center; justify-content: space-between; height: 26px; margin-top: 1px; padding-left: 2px; }
h1 { font-size: 17px; line-height: 24px; font-weight: 600; }
.actions { display: flex; align-items: center; gap: 7px; }
.actions .bare { width: 19px; justify-content: center; }
.actions .bare svg { width: 16px; height: 16px; fill: none; stroke: currentColor; stroke-width: 1.5; stroke-linejoin: round; stroke-linecap: round; }
.goal { padding-left: 2px; font-size: 9px; line-height: 12px; color: var(--faint); }
.toolbar { display: flex; align-items: center; margin: 25px 0 28px 2px; height: 27px; }
.people { display: flex; margin: 0 13px 0 10px; }
.people .av { width: 30px; height: 30px; border: 2px solid #fff; margin-right: -7px; font-size: 10px; }
.menu { display: flex; align-items: center; gap: 12px; height: 27px; padding: 0 12px; border: 0; background: none; font-weight: 500; }
.menu svg, .pick svg { width: 9px; height: 9px; color: var(--subtle); }
.view { display: flex; align-items: center; gap: 7px; margin-left: auto; }
.view label { font-size: 8px; text-transform: uppercase; color: var(--faint); }
.pick { position: relative; }
.pick select { height: 26px; padding: 0 29px 0 9px; border: 0; border-radius: 2px; background: var(--neutral); appearance: none; font-weight: 500; }
.pick svg { position: absolute; right: 11px; top: 9px; }

/* Columns and lanes */
.grid { display: grid; grid-template-columns: repeat(5, minmax(0, 1fr)); gap: 7px; }
.heads { display: flex; align-items: flex-start; gap: 3px; }
.heads .grid { flex: 1; }
h3 {
  height: 39px; padding: 0 12px; border-radius: 4px 4px 0 0; background: var(--sunken);
  color: var(--faint); font-size: 9px; line-height: 38px; text-transform: uppercase;
}
.lane { margin-right: 29px; }
.lane:last-child { flex: 1; display: flex; flex-direction: column; }
.lane:last-child .grid { flex: 1; }
.lane:last-child .col { padding-bottom: 5px; }
.lane > header { display: flex; align-items: center; height: 34px; padding-left: 2px; color: var(--subtle); }
.tog { width: 9px; height: 9px; }
.epic { width: 14px; height: 14px; margin: 0 4px 0 5px; }
.sw { width: 16px; height: 16px; margin-right: 7px; border-radius: 3px; }
.lane > header a, .lane > header span { font-size: 9px; }
.lane > header b { margin: 0 6px; font-weight: 400; color: #091e42; }
.lane > header em {
  margin-left: 6px; padding: 0 3px; border-radius: 2px; background: var(--neutral);
  font-size: 9px; line-height: 13px; font-style: normal; font-weight: 600;
}

.cyan { background: #c6edfb; color: #206a83; }
.blue { background: #cce0ff; color: #0055cc; }
.slate { background: #626f86; color: #fff; }
.purple { background: #6e5dc6; color: #fff; }

.col { display: flex; flex-direction: column; gap: 5px; padding: 5px 4px 38px; border-radius: 4px; background: var(--sunken); }
.create { display: flex; align-items: center; gap: 3px; height: 28px; padding: 0 7px; border: 0; background: none; font-weight: 600; }
.create svg { width: 13px; height: 13px; color: var(--subtle); }
.group + .create { margin-bottom: -33px; }

/* Cards */
.card {
  padding: 10px 11px 11px 10px; border-radius: 3px; background: #fff;
  box-shadow: 0 1px 1px rgba(9, 30, 66, .25), 0 0 1px rgba(9, 30, 66, .31);
}
.card.hot { background: #fff7d6; }
.card footer { display: flex; align-items: center; height: 20px; margin-top: 8px; color: var(--subtle); font-size: 10px; }
.card footer a { margin: 0 auto 0 5px; }
.done .card footer a { text-decoration: line-through; }
.ty { width: 11px; height: 11px; }
.pr { width: 11px; height: 12px; margin-right: 6px; }
.fl { width: 8px; height: 10px; margin-right: 7px; }
.est { min-width: 16px; margin-right: 5px; border-radius: 7px; background: rgba(9, 30, 66, .06); text-align: center; line-height: 14px; color: var(--text); }
.tag { display: table; margin-top: 6px; padding: 0 3px; border-radius: 2px; font-size: 9px; line-height: 13px; font-weight: 700; white-space: nowrap; }
.parent { padding-top: 11px; padding-bottom: 10px; }
.group > .parent { padding-bottom: 9px; border-radius: 3px 3px 0 0; box-shadow: 0 0 1px rgba(9, 30, 66, .31); }
.subs {
  display: flex; flex-direction: column; gap: 3px;
  padding: 6px 4px 5px; border: 1px solid #cfd3da; border-radius: 0 0 5px 5px; background: var(--neutral);
}
.group.subs { padding-top: 0; border-radius: 5px; }
h4 { height: 19px; color: var(--faint); font-size: 9px; line-height: 22px; }
h4 b { font-weight: 600; }

/* Floating help pills */
.quick { position: absolute; top: 798px; right: 20px; display: flex; flex-direction: column; gap: 532px; pointer-events: none; }
.pill {
  display: flex; align-items: center; height: 32px; padding: 0 7px 0 16px; border-radius: 16px;
  background: #6e5dc6; color: #fff; font-weight: 700; pointer-events: auto;
  box-shadow: 0 4px 8px rgba(9, 30, 66, .2);
}
.pill svg { width: 11px; height: 15px; margin-right: 7px; }
.pill button { width: 22px; height: 22px; margin-left: 9px; padding: 0; border: 0; border-radius: 50%; background: #8270db; font-size: 9px; line-height: 22px; }
```
